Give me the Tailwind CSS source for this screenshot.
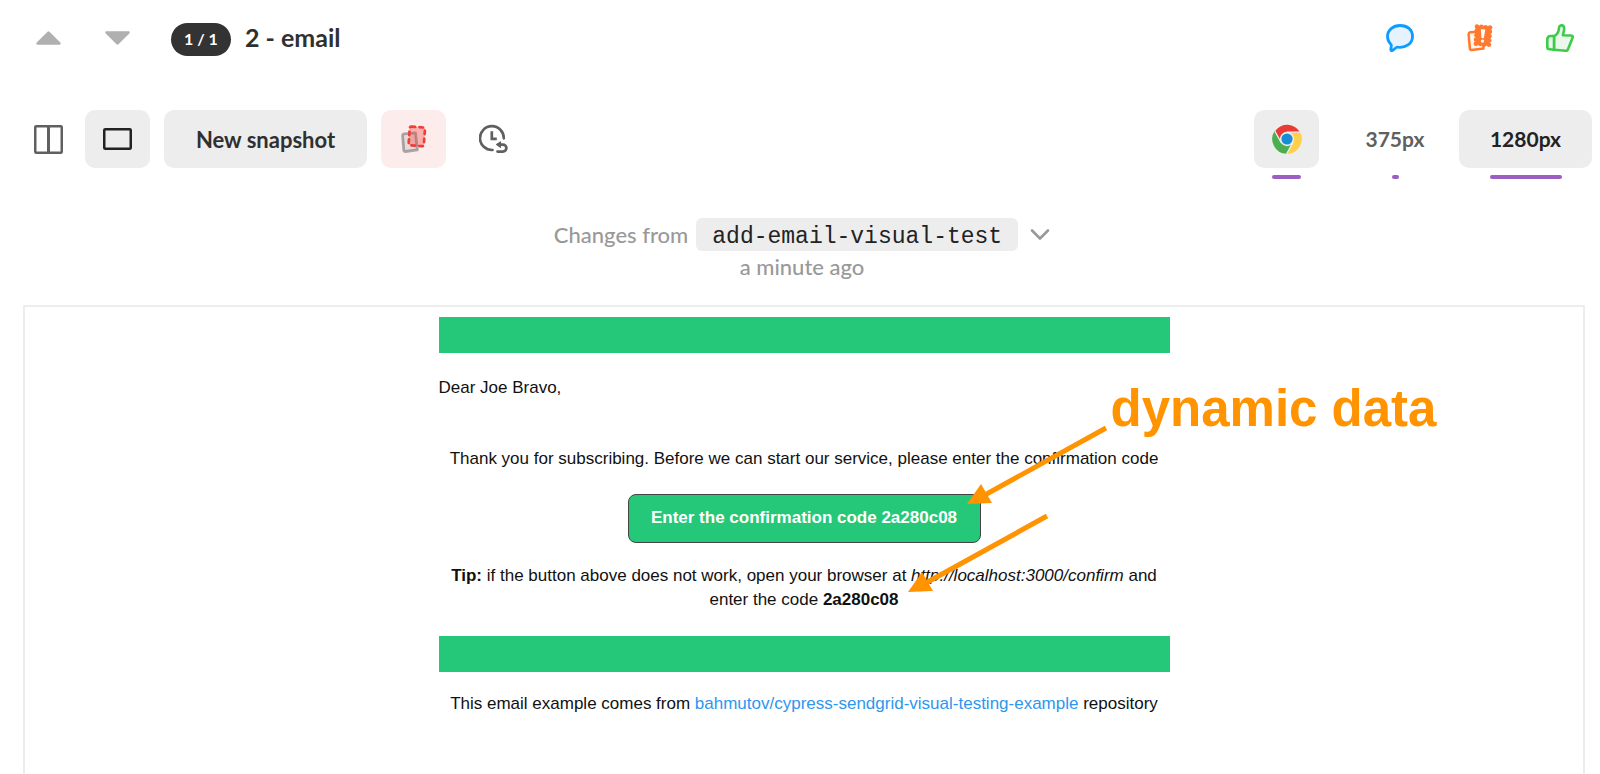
<!DOCTYPE html>
<html lang="en">
<head>
<meta charset="utf-8">
<meta name="viewport" content="width=device-width, initial-scale=1">
<title>2 - email</title>
<script src="https://cdn.jsdelivr.net/npm/@tailwindcss/browser@4"></script>
</head>
<body class="flex min-h-screen flex-col overflow-x-hidden bg-white font-['Lato','Liberation_Sans',sans-serif] text-[#303030]">

<header class="flex h-[78px] items-center justify-between pr-[26px] pb-0.5 pl-9">
  <div class="flex items-center">
    <button type="button" aria-label="Previous snapshot" class="mr-11">
      <svg class="block" width="25" height="14" viewBox="0 0 25 14" fill="#b0b0b0"><path d="M11.3.9a1.7 1.7 0 0 1 2.4 0l10.600 10.700c.8.800.4 2.200-.8 2.200h-22c-1.200 0-1.600-1.400-.8-2.200z"/></svg>
    </button>
    <button type="button" aria-label="Next snapshot" class="mr-[41px]">
      <svg class="block" width="25" height="14" viewBox="0 0 25 14" fill="#b0b0b0"><path d="M11.3 13.100a1.700 1.700 0 0 0 2.400 0L24.300 2.400c.8-.8.4-2.200-.8-2.200h-22C.3.2-.1 1.600.7 2.400z"/></svg>
    </button>
    <span class="mt-0.5 mr-3.5 flex h-[33px] w-[60px] items-center justify-center rounded-full bg-[#333] text-base font-bold text-white">1 / 1</span>
    <h1 class="text-[25px] font-bold">2 - email</h1>
  </div>
  <div class="flex items-center gap-[53px]">
    <button type="button" aria-label="Comment">
      <svg class="block" width="28" height="28" viewBox="0 0 28 28"><path d="M14.200 1.500C7 1.500 1.500 6.200 1.500 12.600c0 3.300 1.300 5.800 3.400 7.800.4.500.5.900.4 1.500l-.5 3.400c-.1 1.200.8 1.800 1.800 1.100l3.800-2.900c.5-.4 1-.4 1.600-.3 8.400.9 14.500-4.100 14.500-10.800S21.200 1.500 14.200 1.500z" fill="#e6f3fe" stroke="#0d9dff" stroke-width="2.800" stroke-linejoin="round"/></svg>
    </button>
    <button type="button" aria-label="Report unstable snapshot">
      <svg class="block" width="26" height="28" viewBox="0 0 26 28"><path d="M3.700 8.300l11.300-1 1.500 17.200-11.800 1.500c-1 .1-1.700-.6-1.800-1.500L1.600 10.400c-.1-1.100.9-2 2.100-2.100z" fill="#fff6f0" stroke="#ff7a2e" stroke-width="2.500" stroke-linejoin="round"/><path d="M10 2.600L23.200 3.500 22 20.700 8.800 19.700z" fill="#ff7a2e" stroke="#ff7a2e" stroke-width="4.600" stroke-linejoin="round" stroke-linecap="round" stroke-dasharray=".1 4.250"/><path d="M13.900 5.200l4.400.3-1.500 8.700-2.300-.1z" fill="#fff"/><circle cx="15.500" cy="17.100" r="1.700" fill="#fff"/></svg>
    </button>
    <button type="button" aria-label="Accept snapshot">
      <svg class="block" width="28" height="29" viewBox="0 0 28 29" fill="none" stroke="#3dcc4a" stroke-width="2.600" stroke-linejoin="round"><path d="M8 12.200c3-1.200 4.800-4 5-8.400.1-3.400 5.300-3.200 5.200.6-.1 2.800-.9 4.600-1.300 6.800l8.200.3c1.400 0 2 1 1.500 2.200l-4.700 11.700c-.4 1-1.100 1.500-2.200 1.400L8 25.700z" fill="#e9f8ea"/><path d="M4.700 12H8v13.700l-4.400-.4c-1.400-.1-2.300-1-2.300-2.400V15.500C1.300 13.300 2.500 12 4.700 12z" fill="#e9f8ea"/></svg>
    </button>
  </div>
</header>

<div class="mt-8 flex items-start justify-between pr-2 pl-[26px] text-[21px] font-bold">
  <div class="flex gap-3.5">
    <button type="button" aria-label="Side by side view" class="flex h-[58px] w-[45px] items-center justify-center">
      <svg width="29" height="29" viewBox="0 0 29 29" fill="none" stroke="#606060"><rect x="1.250" y="1.250" width="26.500" height="26.500" rx="1" stroke-width="2.500"/><path d="M14.500 2v25" stroke-width="3"/></svg>
    </button>
    <button type="button" aria-label="Single view" class="flex h-[58px] w-[65px] items-center justify-center rounded-[10px] bg-[#ededed]">
      <svg width="29" height="22" viewBox="0 0 29 22"><rect x="1.250" y="1.250" width="26.500" height="19.500" rx="1" fill="none" stroke="#222" stroke-width="2.500"/></svg>
    </button>
    <button type="button" class="flex h-[58px] w-[203px] items-center justify-center rounded-[10px] bg-[#ededed] text-[22px]">New snapshot</button>
    <button type="button" aria-label="Highlight changes" class="flex h-[58px] w-[65px] items-center justify-center rounded-[10px] bg-[#fdecec]">
      <svg width="26" height="28" viewBox="0 0 26 28"><path d="M3.400 8.800L14.500 7.800 16.300 24.800 4.500 26.500c-1 .1-1.600-.4-1.700-1.400L1.600 10.700c-.1-1.100.6-1.800 1.800-1.900z" fill="#999" fill-opacity=".22" stroke="#777" stroke-opacity=".6" stroke-width="2.800" stroke-linejoin="round"/><path d="M10.600 1.600l11.800.9c1.100.1 1.700.8 1.600 1.900l-1.200 15.200c-.1 1.100-.8 1.700-1.900 1.600L9.300 20.300c-1.100-.1-1.700-.8-1.600-1.900L8.700 3.200c.1-1.100.8-1.700 1.900-1.600z" fill="#f0423c" fill-opacity=".35" stroke="#ef3e38" stroke-width="2.700" stroke-linecap="round" stroke-dasharray="3.600 4.300"/></svg>
    </button>
    <button type="button" aria-label="Snapshot history" class="flex h-[58px] w-[67px] items-center justify-center">
      <svg width="29" height="30" viewBox="0 0 29 30" fill="none" stroke="#606060" stroke-width="2.700" stroke-linecap="round" stroke-linejoin="round"><path d="M13.500 26A11.900 11.900 0 1 1 24.800 14.300"/><path d="M12.800 7.300v7.500h5" stroke-linecap="butt" stroke-linejoin="miter"/><path d="M19.500 20.600h4.400a3.500 3.500 0 0 1 0 7h-5.400"/><path d="M17.600 20.600l3.900-2.700v5.400z" fill="#606060" stroke-width="1.200"/></svg>
    </button>
  </div>
  <div class="flex">
    <div class="flex flex-col items-center gap-[7px]">
      <button type="button" aria-label="Chrome" class="flex h-[58px] w-[65px] items-center justify-center rounded-[10px] bg-[#ededed]">
        <svg width="30" height="30" viewBox="0 0 30 30"><path d="M15 8.200h13.200A14.800 14.800 0 0 1 15 29.800l5.900-11.400z" fill="#ffd04c"/><path d="M9.100 18.400L2.800 6.700A14.800 14.800 0 0 0 14.500 29.800l6.400-11.400z" fill="#4bae4f"/><path d="M9.100 18.400L3.200 7A14.800 14.800 0 0 1 28 8.200H15z" fill="#e93a36"/><path d="M15 8.200h13.500M20.900 18.400L14.700 29.800M9.100 18.400L2.900 7.200" stroke="#ededed" stroke-width="1.300"/><circle cx="15" cy="15" r="7.200" fill="#ededed"/><circle cx="15" cy="15" r="5.600" fill="#168dd5"/></svg>
      </button>
      <span class="h-1 w-[29px] rounded-full bg-[#9b5fc0]"></span>
    </div>
    <div class="flex flex-col items-center gap-[7px]">
      <button type="button" class="h-[58px] w-[140px] pl-3 text-center text-[#606060]">375px</button>
      <span class="ml-3 h-1 w-[7px] rounded-full bg-[#9b5fc0]"></span>
    </div>
    <div class="flex flex-col items-center gap-[7px]">
      <button type="button" class="h-[58px] w-[133px] rounded-[10px] bg-[#ededed] text-[#222]">1280px</button>
      <span class="h-1 w-[72px] rounded-full bg-[#9b5fc0]"></span>
    </div>
  </div>
</div>

<div class="mt-[39px] flex flex-col items-center pl-1 text-[22px] font-medium text-[#999]">
  <button type="button" class="flex items-center">
    <span class="mr-2">Changes from</span>
    <code class="flex h-[33px] items-center rounded-md bg-[#ededed] px-4 pt-1 font-['Liberation_Mono',monospace] text-[23px] leading-7 font-normal text-[#222]">add-email-visual-test</code>
    <svg class="ml-3" width="20" height="14" viewBox="0 0 20 14" fill="none" stroke="#999" stroke-width="2.600" stroke-linecap="round" stroke-linejoin="round"><path d="M2 2.500l8 8 8-8"/></svg>
  </button>
  <p class="h-8 leading-8">a minute ago</p>
</div>

<main class="mt-[22px] mr-[15px] ml-[23px] flex-1 border-2 border-b-0 border-[#ededed] font-['Liberation_Sans',Arial,sans-serif] text-[17px] leading-6 text-[#111]">
  <article class="relative mx-auto mt-[10px] max-w-[731px]">
    <div class="h-9 bg-[#25c878]"></div>
    <p class="mt-[23px]">Dear Joe Bravo,</p>
    <div class="mt-[47px] text-center">
      <p>Thank you for subscribing. Before we can start our service, please enter the confirmation code</p>
      <button type="button" class="mt-[23px] h-[49px] w-[353px] rounded-lg border border-[#444] bg-[#25c878] pb-0.5 font-bold text-white">Enter the confirmation code 2a280c08</button>
      <p class="mt-[21px] px-2"><b>Tip:</b> if the button above does not work, open your browser at <i>http://localhost:3000/confirm</i> and enter the code <b>2a280c08</b></p>
    </div>
    <div class="mt-6 h-9 bg-[#25c878]"></div>
    <p class="mt-5 text-center">This email example comes from <a href="#" class="text-[#2e96ee]">bahmutov/cypress-sendgrid-visual-testing-example</a> repository</p>

    <!-- Annotation over the email -->
    <svg class="pointer-events-none absolute top-[100px] left-[460px]" width="220" height="190" viewBox="0 0 220 190" fill="#ff9300" stroke="#ff9300" stroke-width="5"><path d="M207 11L84 79M148 99L25 167"/><path d="M68 87L82 67 93 86zM9 175L23 155 34 174z" stroke="none"/></svg>
    <p class="absolute top-[64px] left-[672px] text-[51px] leading-[56px] font-bold whitespace-nowrap text-[#ff9300]">dynamic data</p>
  </article>
</main>
</body>
</html>
